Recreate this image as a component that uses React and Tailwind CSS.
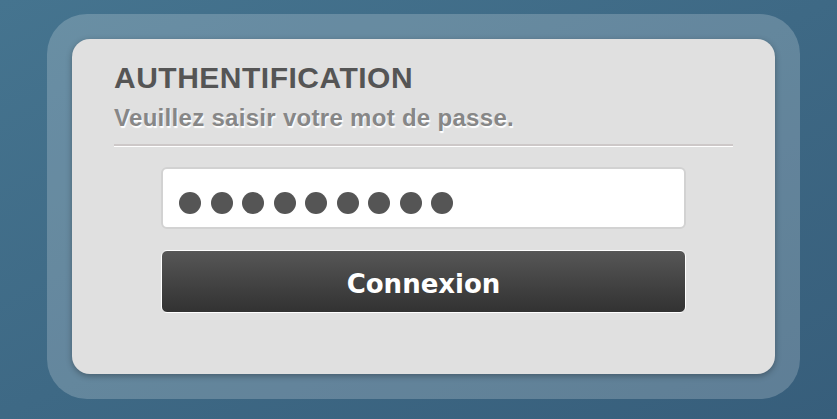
const App = () => {
  const dots = Array.from({ length: 9 })

  return (
    <div className="h-[419px] w-[837px] overflow-hidden bg-gradient-to-br from-[#45748f] to-[#375e7b] pt-[14px] pl-[47px]">
      {/* Frame */}
      <div className="w-[753px] h-[385px] rounded-[40px] bg-white/20 p-[25px]">
        {/* Card */}
        <div className="h-[335px] rounded-[18px] bg-[#e0e0e0] shadow-[0_2px_6px_rgba(0,0,0,0.3)] px-[42px] pt-[24px] font-['Liberation_Sans',Arial,sans-serif]">
          <h1 className="text-[30px] leading-[30px] tracking-[0.5px] font-bold text-[#555]">AUTHENTIFICATION</h1>
          <p className="mt-[13px] text-[24px] leading-[24px] tracking-[0.3px] font-bold text-[#878787] [text-shadow:1px_2px_1px_#fff]">
            Veuillez saisir votre mot de passe.
          </p>
          <div className="mt-[14px] h-[2px] bg-[#cdc8c8] border-b border-white box-content" />

          <div className="mx-auto mt-[20px] w-[525px] flex flex-col gap-[21px]">
            {/* Password field */}
            <div className="h-[62px] rounded-[6px] border-2 border-[#d2d2d2] bg-white pl-[16px] pt-[23px] flex gap-[9.5px]">
              {dots.map((_, i) => (
                <span key={i} className="w-[22px] h-[22px] rounded-full bg-[#555]" />
              ))}
            </div>

            {/* Submit */}
            <button className="h-[63px] rounded-[6px] border-[1.5px] border-white bg-gradient-to-b from-[#575757] to-[#323232] pt-[6px] text-white text-[26px] font-bold font-['DejaVu_Sans',Verdana,sans-serif]">
              Connexion
            </button>
          </div>
        </div>
      </div>
    </div>
  )
}

export default App
